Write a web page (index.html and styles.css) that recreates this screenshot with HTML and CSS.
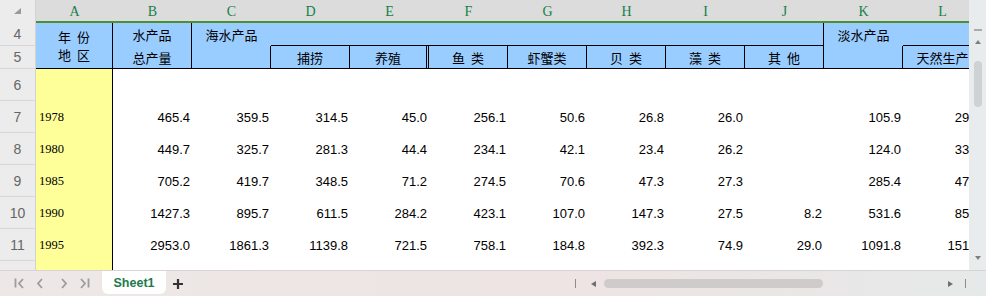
FILE: index.html
```html
<!DOCTYPE html>
<html lang="zh-CN">
<head>
  <meta charset="UTF-8" />
  <title>Sheet1</title>
  <link rel="stylesheet" href="styles.css">
</head>
<body>
  <div class="app">
    <div class="main">
      <div class="sheet">
        <div class="grid">
          <div class="corner"><span class="tri"></span></div>
          <div class="ch">A</div><div class="ch">B</div><div class="ch">C</div><div class="ch">D</div>
          <div class="ch">E</div><div class="ch">F</div><div class="ch">G</div><div class="ch">H</div>
          <div class="ch">I</div><div class="ch">J</div><div class="ch">K</div><div class="ch">L</div>

          <div class="rh">4</div>
          <div class="hd r b tall"><span>年 份<br>地 区</span></div>
          <div class="hd r">水产品</div>
          <div class="hd">海水产品</div>
          <div class="hd r b wide"></div>
          <div class="hd">淡水产品</div>
          <div class="hd b"></div>

          <div class="rh">5</div>
          <div class="hd r b">总产量</div>
          <div class="hd r b"></div>
          <div class="hd r b">捕捞</div>
          <div class="hd dbl b">养殖</div>
          <div class="hd r b">鱼 类</div>
          <div class="hd r b">虾蟹类</div>
          <div class="hd r b">贝 类</div>
          <div class="hd r b">藻 类</div>
          <div class="hd r b">其 他</div>
          <div class="hd r b"></div>
          <div class="hd b">天然生产</div>

          <div class="rh">6</div>
          <div class="y"></div>
          <div class="rest"></div>

          <div class="rh">7</div>
          <div class="y">1978</div>
          <div class="n">465.4</div><div class="n">359.5</div><div class="n">314.5</div><div class="n">45.0</div>
          <div class="n">256.1</div><div class="n">50.6</div><div class="n">26.8</div><div class="n">26.0</div>
          <div class="n"></div><div class="n">105.9</div><div class="n">29.8</div>

          <div class="rh">8</div>
          <div class="y">1980</div>
          <div class="n">449.7</div><div class="n">325.7</div><div class="n">281.3</div><div class="n">44.4</div>
          <div class="n">234.1</div><div class="n">42.1</div><div class="n">23.4</div><div class="n">26.2</div>
          <div class="n"></div><div class="n">124.0</div><div class="n">33.8</div>

          <div class="rh">9</div>
          <div class="y">1985</div>
          <div class="n">705.2</div><div class="n">419.7</div><div class="n">348.5</div><div class="n">71.2</div>
          <div class="n">274.5</div><div class="n">70.6</div><div class="n">47.3</div><div class="n">27.3</div>
          <div class="n"></div><div class="n">285.4</div><div class="n">47.7</div>

          <div class="rh">10</div>
          <div class="y">1990</div>
          <div class="n">1427.3</div><div class="n">895.7</div><div class="n">611.5</div><div class="n">284.2</div>
          <div class="n">423.1</div><div class="n">107.0</div><div class="n">147.3</div><div class="n">27.5</div>
          <div class="n">8.2</div><div class="n">531.6</div><div class="n">85.3</div>

          <div class="rh">11</div>
          <div class="y">1995</div>
          <div class="n">2953.0</div><div class="n">1861.3</div><div class="n">1139.8</div><div class="n">721.5</div>
          <div class="n">758.1</div><div class="n">184.8</div><div class="n">392.3</div><div class="n">74.9</div>
          <div class="n">29.0</div><div class="n">1091.8</div><div class="n">151.6</div>

          <div class="rh">12</div>
          <div class="y"></div>
          <div class="rest"></div>
        </div>
      </div>
      <div class="vscroll">
        <span class="dash"></span>
        <span class="up"></span>
        <span class="vthumb"></span>
        <span class="down"></span>
      </div>
    </div>

    <div class="tabs">
      <svg class="nav" width="92" height="25" viewBox="0 0 92 25">
        <g fill="none" stroke="#9c9c9c" stroke-width="1.8">
          <path d="M15.5 7.5v9" />
          <path d="M23 8l-4 4.5 4 4.5" />
          <path d="M42 8l-4 4.5 4 4.5" />
          <path d="M62 8l4 4.5-4 4.5" />
          <path d="M81 8l4 4.5-4 4.5" />
          <path d="M88.5 7.5v9" />
        </g>
      </svg>
      <div class="tab">Sheet1</div>
      <svg class="plus" width="10" height="10" viewBox="0 0 10 10">
        <path d="M0 5h10M5 0v10" stroke="#333" stroke-width="2.2" />
      </svg>
      <div class="hs">
        <span class="bar"></span>
        <span class="left"></span>
        <span class="hthumb"></span>
        <span class="right"></span>
        <span class="bar end"></span>
      </div>
    </div>
  </div>
</body>
</html>
```

FILE: styles.css
```css
body {
  margin: 0;
  font-family: "Liberation Sans", Arial, sans-serif;
  background: #fff;
  overflow: hidden;
}
.app {
  width: 986px;
  height: 296px;
  display: flex;
  flex-direction: column;
}
.main {
  display: flex;
  height: 270px;
}
.sheet {
  width: 969px;
  overflow: hidden;
}
.grid {
  display: grid;
  grid-template-columns: 36px 77px repeat(11, 79px);
  grid-template-rows: 23px 23px 23px repeat(7, 32px);
  width: 982px;
}
.grid > div {
  box-sizing: border-box;
  display: flex;
  align-items: center;
  overflow: hidden;
  white-space: nowrap;
}
.corner {
  background: #ececec;
  border-right: 1px solid #d2d2d2;
  justify-content: center;
}
.tri {
  width: 0;
  height: 0;
  border-left: 7px solid transparent;
  border-bottom: 6px solid #9a9a9a;
  margin-top: -1px;
}
.ch {
  background: #dcdcdc;
  border-bottom: 2px solid #4b9133;
  justify-content: center;
  padding-top: 2px;
  font-family: "Liberation Serif", "DejaVu Serif", serif;
  font-size: 14px;
  color: #16804a;
}
.rh {
  background: #ececec;
  border-right: 1px solid #d2d2d2;
  border-bottom: 1px solid #d6d6d6;
  justify-content: center;
  font-size: 14px;
  color: #666;
}
.hd {
  background: #99ccff;
  justify-content: center;
  font-family: "Noto Sans CJK SC", sans-serif;
  font-size: 13px;
  word-spacing: 3px;
  color: #000;
}
.hd.r {
  border-right: 1px solid #000;
}
.hd.b {
  border-bottom: 1px solid #000;
}
.hd.dbl {
  border-right: 3px double #000;
}
.tall {
  grid-row: span 2;
  text-align: center;
  line-height: 18px;
}
.wide {
  grid-column: span 7;
}
.rest {
  grid-column: span 11;
}
.y {
  background: #ffff99;
  border-right: 1px solid #000;
  padding-left: 3px;
  font-family: "Liberation Serif", serif;
  font-size: 12.5px;
}
.n {
  justify-content: flex-end;
  padding-right: 2px;
  font-size: 13px;
  color: #000;
}

.vscroll {
  width: 17px;
  background: #e9ecec;
  display: flex;
  flex-direction: column;
  align-items: center;
}
.dash {
  width: 8px;
  height: 2px;
  background: #aaa;
  margin: 29px 0 0 1px;
}
.up {
  width: 0;
  height: 0;
  border-left: 3px solid transparent;
  border-right: 3px solid transparent;
  border-bottom: 4px solid #7f7f7f;
  margin-top: 9px;
}
.vthumb {
  width: 8px;
  height: 46px;
  border-radius: 4px;
  background: #cfd2d2;
  margin: 17px 0 0 1px;
}
.down {
  width: 0;
  height: 0;
  border-left: 3px solid transparent;
  border-right: 3px solid transparent;
  border-top: 4px solid #7f7f7f;
  margin: auto 0 10px 1px;
}

.tabs {
  height: 26px;
  box-sizing: border-box;
  border-top: 1px solid #d9d4d3;
  background: linear-gradient(90deg, #ede8e7, #ede4e3 60%, #e6e9e9);
  display: flex;
  align-items: center;
}
.nav {
  display: block;
  flex-shrink: 0;
}
.tab {
  margin-left: 10px;
  width: 64px;
  height: 23px;
  align-self: flex-start;
  background: #fff;
  border-radius: 0 0 6px 6px;
  display: flex;
  align-items: center;
  justify-content: center;
  font-size: 12.5px;
  font-weight: bold;
  color: #1d7a4b;
}
.plus {
  margin-left: 7px;
  display: block;
}
.hs {
  margin-left: auto;
  width: 411px;
  box-sizing: border-box;
  padding-right: 20px;
  display: flex;
  align-items: center;
}
.bar {
  width: 1px;
  height: 9px;
  background: #8c8c8c;
}
.bar.end {
  margin-left: 12px;
}
.left {
  width: 0;
  height: 0;
  border-top: 3px solid transparent;
  border-bottom: 3px solid transparent;
  border-right: 5px solid #6f6f6f;
  margin-left: 15px;
}
.hthumb {
  width: 219px;
  height: 9px;
  border-radius: 4.5px;
  background: #d0cbcb;
  margin-left: 8px;
}
.right {
  width: 0;
  height: 0;
  border-top: 3px solid transparent;
  border-bottom: 3px solid transparent;
  border-left: 5px solid #6f6f6f;
  margin-left: auto;
}
```
